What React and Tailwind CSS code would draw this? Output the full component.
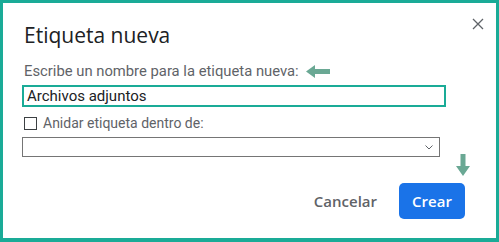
import React from "react";

export default function App() {
  return (
    <div
      className="w-[499px] h-[242px] bg-white border-[#1aab97] border-t-[3px] border-l-[3px] border-r-[3px] border-b-[4px] box-border relative"
      style={{ fontFamily: "Roboto, 'Liberation Sans', sans-serif" }}
    >
      <svg className="absolute left-[469px] top-[15px]" width="12" height="12" viewBox="0 0 12 12">
        <path d="M1 1 L11 11 M11 1 L1 11" stroke="#5f6368" strokeWidth="1.3" fill="none" />
      </svg>
      <div className="pl-[21px] pr-[50px] pt-[18px] flex flex-col">
        <div className="text-[21px] leading-[28px] text-[#202124]" style={{ fontFamily: "'Open Sans', Roboto, sans-serif" }}>
          Etiqueta nueva
        </div>
        <div className="mt-[13px] flex items-center gap-[7px]">
          <span className="text-[14.8px] leading-[18px] text-[#5f6368]">Escribe un nombre para la etiqueta nueva:</span>
          <svg width="24" height="13" viewBox="0 0 24 13">
            <path d="M0 6.5 L9 0 L9 4 L24 4 L24 9 L9 9 L9 13 Z" fill="#6aa894" />
          </svg>
        </div>
        <div className="mt-[5px] ml-[-2px] w-[424px] h-[22px] border-2 border-[#1aab97] flex items-center pl-[3px] text-[15px] text-[#202124]">
          Archivos adjuntos
        </div>
        <div className="mt-[8px] flex items-center gap-[6px]">
          <div className="w-[13px] h-[13px] border border-[#3c4043] bg-white" />
          <span className="text-[14px] leading-[16px] text-[#5f6368]">Anidar etiqueta dentro de:</span>
        </div>
        <div className="mt-[6px] ml-[-2px] w-[418px] h-[20px] border border-[#757575] flex items-center justify-end pr-[6px]">
          <svg width="8" height="5" viewBox="0 0 8 5">
            <path d="M0.5 0.5 L4 4 L7.5 0.5" stroke="#5f6368" strokeWidth="1" fill="none" />
          </svg>
        </div>
        <div className="flex justify-end items-start mr-[-19px] mt-[-3px]">
          <div className="flex flex-col items-end">
            <svg className="mr-[-5px]" width="14" height="22" viewBox="0 0 14 22">
              <path d="M4.5 0 L9.5 0 L9.5 12 L14 12 L7 22 L0 12 L4.5 12 Z" fill="#6aa894" />
            </svg>
            <div className="flex items-center gap-[22px] mt-[7px]">
              <span
                className="text-[15px] font-semibold text-[#5f6368]"
                style={{ fontFamily: "'Open Sans', Roboto, sans-serif" }}
              >
                Cancelar
              </span>
              <div
                className="w-[66px] h-[36px] rounded-[5px] bg-[#1a73e8] text-white text-[15px] font-semibold flex items-center justify-center"
                style={{ fontFamily: "'Open Sans', Roboto, sans-serif" }}
              >
                Crear
              </div>
            </div>
          </div>
        </div>
      </div>
    </div>
  );
}
